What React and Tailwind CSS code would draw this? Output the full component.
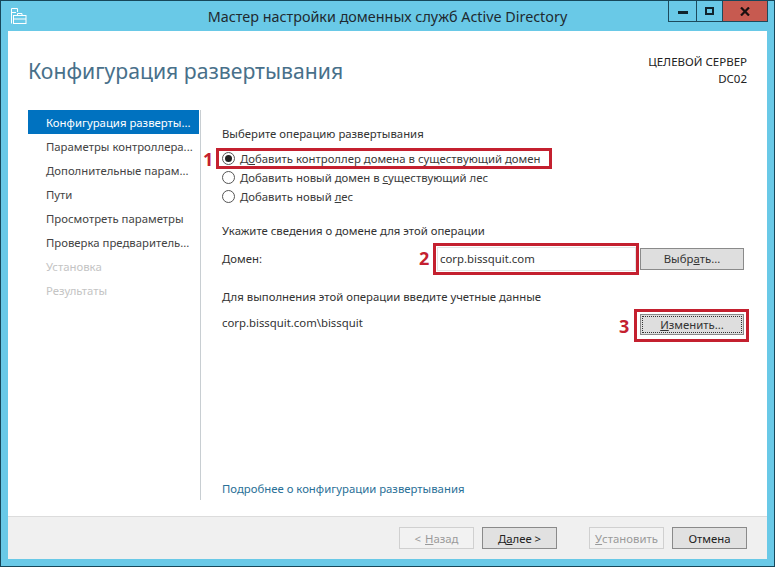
import React from "react";

const steps = [
  { label: "Конфигурация разверты...", active: true },
  { label: "Параметры контроллера..." },
  { label: "Дополнительные парам..." },
  { label: "Пути" },
  { label: "Просмотреть параметры" },
  { label: "Проверка предваритель..." },
  { label: "Установка", disabled: true },
  { label: "Результаты", disabled: true },
];

const Radio = ({ checked, children }) => (
  <div className="flex items-center h-[19px]">
    <span className="w-[13px] h-[13px] rounded-full border border-[#555] bg-white flex items-center justify-center shrink-0">
      {checked && <span className="w-[7px] h-[7px] rounded-full bg-[#222]" />}
    </span>
    <span className="ml-[5px]">{children}</span>
  </div>
);

const Button = ({ children, disabled, className = "" }) => (
  <div
    className={
      "w-[75px] h-[22px] pt-[2px] flex items-center justify-center border " +
      (disabled
        ? "border-[#d0d0d0] text-[#9a9a9a] bg-[#f2f2f2] "
        : "border-[#8a8a8a] text-[#222] bg-[#e1e1e1] ") +
      className
    }
  >
    {children}
  </div>
);

const App = () => {
  return (
    <div className="relative w-[775px] h-[567px] overflow-hidden bg-[#69c9e7] border border-[#16475a] font-['Noto_Sans',sans-serif] text-[11.35px] text-[#333] flex flex-col">
      {/* title bar */}
      <div className="h-[30px] flex items-start shrink-0 pl-[9px]">
        <svg width="17" height="18" viewBox="0 0 17 18" className="mt-[6px] text-white" fill="none" stroke="currentColor" strokeWidth="1">
          <path d="M1.5 16.5V1.5H7.5V5" />
          <path d="M1.5 5.5H6" />
          <rect x="3.5" y="8.5" width="12.5" height="8" />
          <path d="M7.5 8.5V6.5H12V8.5" />
          <path d="M3.5 12H16" />
        </svg>
        <div className="flex-1 text-center text-[14.35px] leading-[31px] text-[#1f2a30] pl-[80px]">
          Мастер настройки доменных служб Active Directory
        </div>
        <div className="flex h-[21px] border border-t-0 border-[#1c4a5c] mr-[6px]">
          <div className="w-[28px] flex items-center justify-center border-r border-[#1c4a5c]">
            <span className="w-[10px] h-[3px] mt-[3px] bg-[#10242c]" />
          </div>
          <div className="w-[25px] flex items-center justify-center">
            <span className="w-[9px] h-[8px] border-2 border-[#10242c]" />
          </div>
          <div className="w-[45px] bg-[#c75a50] border-l border-[#1c4a5c] flex items-center justify-center">
            <svg width="10" height="9" viewBox="0 0 10 9" stroke="#1a1010" strokeWidth="2.2">
              <path d="M1 0.5L9 8.5M9 0.5L1 8.5" />
            </svg>
          </div>
        </div>
      </div>

      {/* client area */}
      <div className="ml-[7px] mr-[7px] mb-[7px] flex-1 bg-white flex flex-col min-h-0">
        <div className="h-[79px] shrink-0 flex justify-between pl-[20px] pr-[20px]">
          <div className="text-[21.2px] leading-[30px] mt-[25px] text-[#48708a]">
            Конфигурация развертывания
          </div>
          <div className="text-right mt-[22px] text-[11.5px] leading-[17px] text-[#222]">
            <div>ЦЕЛЕВОЙ СЕРВЕР</div>
            <div>DC02</div>
          </div>
        </div>

        <div className="flex-1 flex min-h-0">
          <div className="w-[171px] ml-[20px] shrink-0">
            {steps.map((s) => (
              <div
                key={s.label}
                className={
                  "h-6 flex items-center pl-[18px] pt-[2px] whitespace-nowrap " +
                  (s.active
                    ? "bg-[#0072c0] text-white"
                    : s.disabled
                      ? "text-[#c4c4c4]"
                      : "text-[#444]")
                }
              >
                {s.label}
              </div>
            ))}
          </div>
          <div className="w-px ml-px bg-[#c8ced2] mb-[16px]" />
          <div className="flex-1 pl-[21px] flex flex-col pb-[19px]">
            <div className="mt-[16px] leading-[16px]">Выберите операцию развертывания</div>
            <div className="mt-[7px] text-[#3a3a3a]">
              <Radio checked>
                Д<span className="underline">о</span>бавить контроллер домена в существующий домен
              </Radio>
              <Radio>
                Добавить новый домен в <span className="underline">с</span>уществующий лес
              </Radio>
              <Radio>
                Добавить новый <span className="underline">л</span>ес
              </Radio>
            </div>
            <div className="mt-[17px] leading-[16px]">Укажите сведения о домене для этой операции</div>
            <div className="mt-[8px] flex items-center h-[24px]">
              <div className="w-[215px]">Домен:</div>
              <div className="w-[199px] h-[24px] pl-[2px] flex items-center border border-[#e4e4e4]">corp.bissquit.com</div>
              <div className="ml-[4px] w-[104px] h-[22px] flex items-center justify-center bg-[#dedede] border border-[#8a8a8a] text-[#333]">
                Выбр<span className="underline">а</span>ть...
              </div>
            </div>
            <div className="mt-[18px] leading-[16px]">Для выполнения этой операции введите учетные данные</div>
            <div className="mt-[6px] flex items-center h-[24px]">
              <div className="w-[418px]">corp.bissquit.com\bissquit</div>
              <div className="w-[104px] h-[21px] mt-[3px] flex items-center justify-center bg-[#dedede] border border-[#8a8a8a] outline-1 outline-dotted -outline-offset-3 outline-[#333] text-[#333]">
                <span className="underline">И</span>зменить...
              </div>
            </div>
            <div className="mt-auto text-[#2a7097]">Подробнее о конфигурации развертывания</div>
          </div>
        </div>

        {/* footer */}
        <div className="h-[43px] shrink-0 bg-[#f0f0f0] border-t border-[#dcdcdc] flex items-center justify-end pr-[20px] pb-[1px]">
          <Button disabled>
            &lt; <span className="underline ml-1">Н</span>азад
          </Button>
          <Button className="ml-[8px]">
            Д<span className="underline">а</span>лее &gt;
          </Button>
          <Button disabled className="ml-[32px]">
            <span className="underline">У</span>становить
          </Button>
          <Button className="ml-[8px]">Отмена</Button>
        </div>
      </div>

      {/* red annotations */}
      <div className="absolute left-[215px] top-[147px] w-[336px] h-[21px] border-[3px] border-[#c4202f]" />
      <div className="absolute left-[202px] top-[146px] text-[18px] leading-[24px] font-bold text-[#c4202f]">1</div>
      <div className="absolute left-[432px] top-[242px] w-[206px] h-[32px] border-[3px] border-[#c4202f]" />
      <div className="absolute left-[418px] top-[245px] text-[18px] leading-[24px] font-bold text-[#c4202f]">2</div>
      <div className="absolute left-[633px] top-[308px] w-[115px] h-[33px] border-[3px] border-[#c4202f]" />
      <div className="absolute left-[618px] top-[313px] text-[18px] leading-[24px] font-bold text-[#c4202f]">3</div>
    </div>
  );
};

export default App;
